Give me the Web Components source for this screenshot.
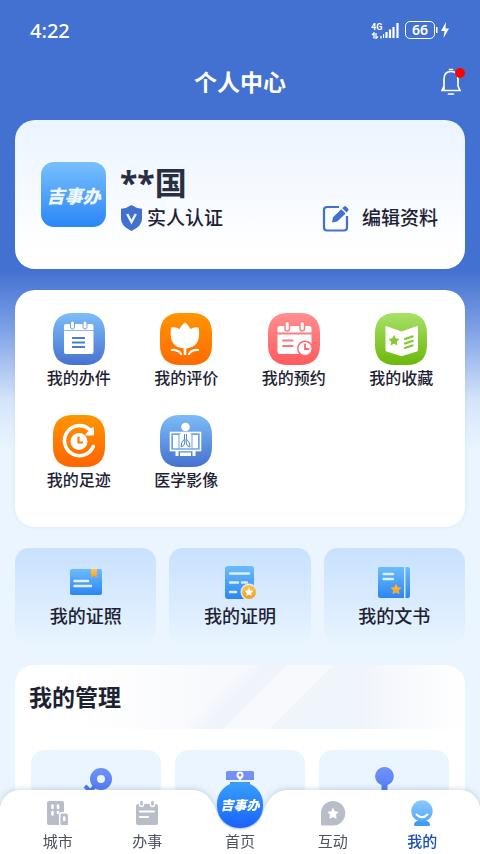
<!DOCTYPE html>
<html lang="zh-CN">
<head>
<meta charset="utf-8">
<meta name="viewport" content="width=device-width, initial-scale=1">
<title>个人中心</title>
<style>
	html {
		scrollbar-width: none;
	}
	body {
		margin: 0;
		color: #1d2233;
		background: #ebf5ff;
		font-family: "Noto Sans", "Noto Sans CJK SC", sans-serif;
	}
</style>
</head>
<body>

<profile-page>
	<status-bar slot="top" time="4:22" network="4G" battery="66"></status-bar>
	<page-header slot="top">个人中心</page-header>

	<profile-card name="**国" badge="实人认证" action="编辑资料"></profile-card>

	<menu-grid>
		<menu-item icon="tasks">我的办件</menu-item>
		<menu-item icon="review">我的评价</menu-item>
		<menu-item icon="booking">我的预约</menu-item>
		<menu-item icon="favorite">我的收藏</menu-item>
		<menu-item icon="history">我的足迹</menu-item>
		<menu-item icon="medical">医学影像</menu-item>
	</menu-grid>

	<doc-list>
		<doc-tile icon="license">我的证照</doc-tile>
		<doc-tile icon="proof">我的证明</doc-tile>
		<doc-tile icon="book">我的文书</doc-tile>
	</doc-list>

	<manage-card heading="我的管理">
		<manage-tile icon="key"></manage-tile>
		<manage-tile icon="post"></manage-tile>
		<manage-tile icon="stamp"></manage-tile>
	</manage-card>

	<tab-bar slot="bottom">
		<tab-item icon="city">城市</tab-item>
		<tab-item icon="work">办事</tab-item>
		<tab-item home>首页</tab-item>
		<tab-item icon="chat">互动</tab-item>
		<tab-item icon="me" active>我的</tab-item>
	</tab-bar>
</profile-page>

<script>
const squircle = (from, to, body) => `
	<svg viewBox="0 0 52 52" width="52" height="52" aria-hidden="true">
		<defs>
			<linearGradient id="bg" x1="0" y1="0" x2="0" y2="1">
				<stop offset="0" stop-color="${from}"/><stop offset="1" stop-color="${to}"/>
			</linearGradient>
		</defs>
		<path d="M20 0H32C45 0 52 7 52 20V32C52 45 45 52 32 52H20C7 52 0 45 0 32V20C0 7 7 0 20 0Z" fill="url(#bg)"/>
		${body}
	</svg>`;

const tile = (body) => `
	<svg viewBox="0 0 36 36" width="36" height="36" aria-hidden="true">
		<defs>
			<linearGradient id="blue" x1="0" y1="0" x2="0" y2="1">
				<stop offset="0" stop-color="#6cbcfd"/><stop offset="1" stop-color="#2b86f3"/>
			</linearGradient>
			<linearGradient id="gold" x1="0" y1="0" x2="0" y2="1">
				<stop offset="0" stop-color="#fdc64d"/><stop offset="1" stop-color="#f79c1d"/>
			</linearGradient>
		</defs>
		${body}
	</svg>`;

const manage = (body) => `
	<svg viewBox="0 0 40 40" width="40" height="40" aria-hidden="true">
		<defs>
			<linearGradient id="ink" x1="0" y1="0" x2="0" y2="40" gradientUnits="userSpaceOnUse">
				<stop offset="0" stop-color="#7294f8"/><stop offset="1" stop-color="#3f6df2"/>
			</linearGradient>
		</defs>
		${body}
	</svg>`;

const tab = (body) => `<svg viewBox="0 0 26 26" width="26" height="26" aria-hidden="true">${body}</svg>`;

const icons = {
	tasks: squircle('#7dbdf8', '#4672cf', `
		<path d="M13 11H38.500Q40.500 11 40.500 13V17H11V13Q11 11 13 11Z" fill="#fff"/>
		<path d="M11 17.800H40.500V39Q40.500 41 38.500 41H13Q11 41 11 39Z" fill="#fff"/>
		<g fill="#fff" stroke="#6ba5ea"><rect x="17.500" y="8" width="4" height="8" rx="2"/><rect x="30" y="8" width="4" height="8" rx="2"/></g>
		<path d="M19 25H32M19 29.500H32M19 34H32" stroke="#4b7bd4" stroke-width="2"/>`),
	review: squircle('#ff9500', '#ff6a00', `
		<path d="M25 9.500Q29 12 30.500 16Q34 13.500 38.500 14.500C40.500 25 38 32.500 29.500 34.800L26.300 35.500V42H23.700V35.500L20 34.800C12 32.500 9.500 25 11.200 14.500Q16 13.500 19.500 16Q21 12 25 9.500Z" fill="#fff"/>
		<path d="M12 37Q18 36.500 21 41M38 37Q32 36.500 29 41" fill="none" stroke="#fff" stroke-width="2.200" stroke-linecap="round"/>`),
	booking: squircle('#ff8f90', '#ff5b5f', `
		<path d="M12 13H41Q43.500 13 43.500 15.500V19.500H9.500V15.500Q9.500 13 12 13Z" fill="#fff"/>
		<path d="M9.500 21.500H43.500V38.500Q43.500 41 41 41H12Q9.500 41 9.500 38.500Z" fill="#fff"/>
		<g fill="#fff" stroke="#ff8082" stroke-width="1.500"><rect x="17" y="8.500" width="4.500" height="9.500" rx="2.200"/><rect x="32" y="8.500" width="4.500" height="9.500" rx="2.200"/></g>
		<path d="M15 27.500H24.500M15 33H24.500" stroke="#ff7678" stroke-width="2" stroke-linecap="round"/>
		<circle cx="37" cy="35.500" r="8" fill="#ff686b"/><circle cx="37" cy="35.500" r="6.500" fill="#fff"/>
		<path d="M37 31.500V36H40.500" fill="none" stroke="#ff686b" stroke-width="1.800" stroke-linecap="round"/>`),
	favorite: squircle('#a9e168', '#6cb80b', `
		<path d="M11 13L26.500 18.500L42 13Q43 13 43 14V37Q43 38 42 38.500L28 42.800Q26.500 43.300 25 42.800L11.500 38.500Q10.500 38 10.500 37V14Q10.500 13 11 13Z" fill="#fff"/>
		<path d="M19 21.800L20.700 25.500L24.500 26L21.700 28.700L22.400 32.500L19 30.600L15.600 32.500L16.300 28.700L13.500 26L17.300 25.500Z" fill="#83c82c"/>
		<path d="M30 26L37.500 23.500M30 30.500L37.500 28M30 35L37.500 32.500" stroke="#83c82c" stroke-width="2.300" stroke-linecap="round"/>`),
	history: squircle('#ff9500', '#ff6500', `
		<path d="M36.500 14.500A15 15 0 1 0 40.300 31.500" fill="none" stroke="#fff" stroke-width="3.600" stroke-linecap="round"/>
		<path d="M40 13V19.500H33.500Z" fill="#fff" stroke="#fff" stroke-width="2" stroke-linejoin="round"/>
		<circle cx="26" cy="26.500" r="8.500" fill="#fff"/>
		<path d="M25.500 21.500V27.500H30" fill="none" stroke="#ff7a00" stroke-width="2.200"/>`),
	medical: squircle('#7cbcf7', '#4671cf', `
		<circle cx="25.500" cy="12" r="4.300" fill="#fff"/>
		<rect x="10.500" y="17.500" width="30" height="18" fill="#6da3e8" stroke="#fff" stroke-width="1.600"/>
		<path d="M13 20H18.500V33.200H13ZM32.500 20H38V33.200H32.500Z" fill="#fff"/>
		<path d="M19.500 20.500Q19.500 17 25.500 17Q31.500 17 31.500 20.500V33.200H19.500Z" fill="#fff"/>
		<path d="M24.500 19V24Q20.500 28 21 32Q24.500 31.500 24.700 28V24M26.500 19V24Q30.500 28 30 32Q26.500 31.500 26.300 28V24" fill="none" stroke="#5487d7"/>
		<path d="M15.500 36H18.500V41H15.500ZM32.500 36H35.500V41H32.500ZM20 37.500H31V41H20Z" fill="#fff"/>`),

	license: tile(`
		<rect x="2" y="5" width="32" height="26" rx="2" fill="url(#blue)"/>
		<path d="M23 5H29V14L26 11.500L23 14Z" fill="url(#gold)"/>
		<path d="M6.500 17H20M6.500 22H23" stroke="#e4f2ff" stroke-width="2.400" stroke-linecap="round"/>`),
	proof: tile(`
		<rect x="3" y="2" width="29" height="33" rx="3" fill="url(#blue)"/>
		<path d="M8 9.500H27M8 18.500H16M20 18.500H25M8 28H14" stroke="#dceeff" stroke-width="2.400" stroke-linecap="round"/>
		<circle cx="27" cy="28" r="8.500" fill="#d8eafd"/><circle cx="27" cy="28" r="7" fill="url(#gold)"/>
		<path d="M27 23.600L28.400 26.400L31.500 26.800L29.200 29L29.800 32L27 30.500L24.200 32L24.800 29L22.500 26.800L25.600 26.400Z" fill="#fff"/>`),
	book: tile(`
		<path d="M4 3H28V34H4Q2 34 2 32V5Q2 3 4 3Z" fill="url(#blue)"/>
		<path d="M29.500 3H32Q34 3 34 5V32Q34 34 32 34H29.500Z" fill="url(#blue)"/>
		<path d="M7.500 10H17M7.500 15H17" stroke="#dceeff" stroke-width="2.400" stroke-linecap="round"/>
		<path d="M20 20.500L21.500 23.500L24.800 24L22.400 26.300L23 29.500L20 28L17 29.500L17.600 26.300L15.200 24L18.500 23.500Z" fill="url(#gold)" stroke="#f9ab2e" stroke-linejoin="round"/>`),

	key: manage(`
		<circle cx="25" cy="13" r="7.500" fill="none" stroke="url(#ink)" stroke-width="7"/>
		<path d="M19 20L9 31M13 24L9 20" stroke="#4f78f3" stroke-width="4"/>`),
	post: manage(`
		<path d="M7.500 5H32.500Q34 5 34 6.500V14H6V6.500Q6 5 7.500 5Z" fill="#7490f5"/>
		<path d="M10 16H30V36H10Z" fill="url(#ink)"/>
		<circle cx="20" cy="9" r="2.500" fill="none" stroke="#fff" stroke-width="2"/>
		<path d="M18 12L20 15L22 12Z" fill="#fff"/>`),
	stamp: manage(`
		<path d="M17.500 26V19A9.300 9.300 0 1 1 23.500 19V26Z" fill="url(#ink)"/>
		<path d="M7 24H34V28H7Z" fill="#6d8ef5"/>`),

	city: tab(`
		<path d="M4 1H17Q19 1 19 3V12H17Q14 12 14 15V25H4Q2 25 2 23V3Q2 1 4 1Z" fill="#b9bdca"/>
		<path d="M17 13.500H21Q23 13.500 23 15.500V25H15.500V15Q15.500 13.500 17 13.500Z" fill="#b9bdca"/>
		<path d="M7.500 5.500V8M13 5.500V8M7.500 12V14.500M13 12V13M19.200 17.500V20" stroke="#fff" stroke-width="2.600" stroke-linecap="round"/>`),
	work: tab(`
		<path d="M4 4H22Q24 4 24 6V23Q24 25 22 25H4Q2 25 2 23V6Q2 4 4 4Z" fill="#b9bdca"/>
		<g fill="#b9bdca" stroke="#fff" stroke-width="1.400"><rect x="5.500" y="0" width="4" height="6.500" rx="2"/><rect x="16.500" y="0" width="4" height="6.500" rx="2"/></g>
		<path d="M6 11.500H20M6 17H14" stroke="#fff" stroke-width="2.200" stroke-linecap="round"/>`),
	chat: tab(`
		<path d="M13 1A12 12 0 0 1 13 25.500H2.500Q1 25.500 1 24V13A12 12 0 0 1 13 1Z" fill="#b9bdca"/>
		<path d="M13 8.500L14.500 11.700L18 12.200L15.500 14.700L16.100 18.200L13 16.500L9.900 18.200L10.500 14.700L8 12.200L11.500 11.700Z" fill="#fff" stroke="#fff" stroke-linejoin="round"/>`),
	me: tab(`
		<defs>
			<linearGradient id="face" x1="0" y1="0" x2="0" y2="1">
				<stop offset="0" stop-color="#8ccafc"/><stop offset="1" stop-color="#55a7fa"/>
			</linearGradient>
		</defs>
		<path d="M8 21H18Q21 22 21 25Q21 26 19.500 26H6.500Q5 26 5 25Q5 22 8 21Z" fill="#3e9bf9"/>
		<circle cx="13" cy="11" r="10.700" fill="url(#face)"/>
		<path d="M7.500 14.500Q13 20 18.500 14.500" fill="none" stroke="#fff" stroke-width="2" stroke-linecap="round"/>`)
};

class BaseElement extends HTMLElement {
	connectedCallback() {
		if (this.shadowRoot) return;
		this.attachShadow({ mode: 'open' });
		this.shadowRoot.innerHTML = this.render();
	}

	attr(name) {
		return this.getAttribute(name) || '';
	}
}

class ProfilePage extends BaseElement {
	render() {
		return `
			<style>
				:host {
					display: block;
					min-height: 100vh;
					background: linear-gradient( #4371d1 270px, #7fa2e6 330px, #d5e4fa 400px, #ebf5ff 450px );
				}
				main {
					display: flex;
					flex-direction: column;
					gap: 21px;
					padding: 0 15px;
				}
			</style>
			<header><slot name="top"></slot></header>
			<main><slot></slot></main>
			<slot name="bottom"></slot>
		`;
	}
}

class StatusBar extends BaseElement {
	render() {
		return `
			<style>
				:host {
					display: flex;
					justify-content: space-between;
					align-items: center;
					height: 60px;
					padding: 0 30px;
					color: #fff;
				}
				time {
					font-size: 20px;
					font-weight: 500;
				}
				.system {
					display: flex;
					align-items: center;
					gap: 6px;
				}
				.signal {
					display: grid;
					grid-template-columns: 12px 16px;
				}
				.network {
					font: 700 9px/10px Roboto, sans-serif;
				}
				.bars {
					grid-row: 1 / 3;
					grid-column: 2;
				}
				.battery {
					display: flex;
					align-items: center;
				}
				.level {
					box-sizing: border-box;
					width: 30px;
					border: 1px solid #fff;
					border-radius: 5px;
					text-align: center;
					font-size: 14px;
					font-weight: 600;
					line-height: 16px;
				}
			</style>
			<time>${this.attr('time')}</time>
			<div class="system">
				<div class="signal">
					<span class="network">${this.attr('network')}</span>
					<svg width="12" height="7" viewBox="0 0 12 7" aria-hidden="true"><path d="M3 6.500V1L1 3M5 1V6.500L7 4.500M10 4V6.500" fill="none" stroke="#fff" stroke-width="1.300"/></svg>
					<svg class="bars" width="16" height="17" viewBox="0 0 16 17" aria-hidden="true"><path d="M0 12V16M3.500 10V16M7 7.500V16M10.500 5V16M14.500 1V16" stroke="#fff" stroke-width="2.200"/></svg>
				</div>
				<div class="battery">
					<span class="level">${this.attr('battery')}</span>
					<svg width="15" height="18" viewBox="0 0 15 18" fill="#fff" aria-hidden="true"><path d="M1 6H2.500V12H1ZM11 1L6 10H9.500L8.500 17L14 7.500H10.500Z"/></svg>
				</div>
			</div>
		`;
	}
}

class PageHeader extends BaseElement {
	render() {
		return `
			<style>
				:host {
					display: grid;
					grid-template-columns: 1fr auto 1fr;
					align-items: center;
					height: 44px;
					padding: 0 19px 16px;
					color: #fff;
				}
				h1 {
					grid-column: 2;
					margin: 0;
					font-size: 23px;
					font-weight: 700;
					line-height: 32px;
				}
				button {
					justify-self: end;
					position: relative;
					display: flex;
					padding: 0;
					border: 0;
					background: none;
				}
				button::after {
					content: "";
					position: absolute;
					top: 0;
					right: -4px;
					width: 10px;
					height: 10px;
					border-radius: 50%;
					background: #f00;
				}
			</style>
			<h1><slot></slot></h1>
			<button type="button" aria-label="消息">
				<svg width="20" height="28" viewBox="0 0 20 28" fill="none" stroke="#fff" stroke-width="1.700" stroke-linecap="round" aria-hidden="true">
					<path d="M8.500 1.500H11.500M3 22V11Q3 3.500 10 3.500Q17 3.500 17 11V18L19 22.500H1L3 18M7.500 26H12.500"/>
				</svg>
			</button>
		`;
	}
}

class ProfileCard extends BaseElement {
	render() {
		return `
			<style>
				:host {
					display: flex;
					align-items: flex-start;
					gap: 14px;
					padding: 42px 27px 37px 26px;
					border-radius: 20px;
					background: linear-gradient( #ebf4ff, #fff 90% );
				}
				.avatar {
					display: grid;
					place-items: center;
					width: 65px;
					height: 65px;
					border-radius: 13px;
					background: linear-gradient( #77c0fe, #2b86f7 );
					color: #eff8ff;
					font-size: 18px;
					font-style: italic;
					font-weight: 900;
				}
				.info {
					flex: 1;
				}
				h2 {
					margin: 0;
					color: #2a2e42;
					font-size: 32px;
					font-weight: 700;
					line-height: 42px;
				}
				.row {
					display: flex;
					align-items: center;
					justify-content: space-between;
					height: 28px;
				}
				.badge,
				button {
					display: flex;
					align-items: center;
					gap: 4px;
					padding: 0;
					border: 0;
					background: none;
					color: inherit;
					font: 500 19px/28px "Noto Sans", "Noto Sans CJK SC", sans-serif;
				}
				button {
					gap: 13px;
				}
			</style>
			<div class="avatar">吉事办</div>
			<div class="info">
				<h2>${this.attr('name')}</h2>
				<div class="row">
					<span class="badge">
						<svg width="23" height="26" viewBox="0 0 23 26" aria-hidden="true">
							<path d="M11.500 0Q16 3.300 22 3.700V14Q22 21 11.500 26Q1 21 1 14V3.700Q7 3.300 11.500 0Z" fill="#4170d0"/>
							<path d="M7.200 9L11.500 17L15.800 9" fill="none" stroke="#eef5ff" stroke-width="2.400"/>
						</svg>
						${this.attr('badge')}
					</span>
					<button type="button">
						<svg width="27" height="27" viewBox="0 0 27 27" aria-hidden="true">
							<path d="M17 2H5Q2 2 2 5V22.500Q2 25.500 5 25.500H22Q25 25.500 25 22.500V11" fill="none" stroke="#4170d0" stroke-width="2.200"/>
							<path d="M10 17.500L11 12.200L19.300 4.200L23.600 8.600L15.300 16.500ZM20.300 3.200L22 1.500Q23 0.500 24 1.500L26.200 3.700Q27 4.700 26.200 5.700L24.500 7.500Z" fill="#4170d0"/>
						</svg>
						${this.attr('action')}
					</button>
				</div>
			</div>
		`;
	}
}

class MenuGrid extends BaseElement {
	render() {
		return `
			<style>
				:host {
					display: grid;
					grid-template-columns: repeat( 4, 1fr );
					row-gap: 26px;
					padding: 23px 10px 36px;
					border-radius: 20px;
					background: #fff;
					box-shadow: 0 0 4px rgba( 70,130,210,0.1 );
				}
			</style>
			<slot></slot>
		`;
	}
}

class MenuItem extends BaseElement {
	render() {
		return `
			<style>
				:host {
					display: block;
				}
				a {
					display: flex;
					flex-direction: column;
					align-items: center;
					gap: 2px;
					color: inherit;
					font-size: 16px;
					font-weight: 500;
					line-height: 22px;
					text-decoration: none;
				}
			</style>
			<a href="#">${icons[this.attr('icon')]}<span><slot></slot></span></a>
		`;
	}
}

class DocList extends BaseElement {
	render() {
		return `
			<style>
				:host {
					display: grid;
					grid-template-columns: repeat( 3, 1fr );
					gap: 13px;
				}
			</style>
			<slot></slot>
		`;
	}
}

class DocTile extends BaseElement {
	render() {
		return `
			<style>
				:host {
					display: block;
				}
				a {
					display: flex;
					flex-direction: column;
					align-items: center;
					gap: 4px;
					padding: 16px 0;
					border-radius: 14px;
					background: linear-gradient( #c8e1fe, #e8f4ff );
					color: inherit;
					font-size: 18px;
					font-weight: 500;
					line-height: 24px;
					text-decoration: none;
				}
			</style>
			<a href="#">${icons[this.attr('icon')]}<span><slot></slot></span></a>
		`;
	}
}

class ManageCard extends BaseElement {
	render() {
		return `
			<style>
				:host {
					display: block;
					overflow: hidden;
					border-radius: 20px 20px 0 0;
					background: #fff;
				}
				h2 {
					margin: 0;
					padding: 0 14px;
					background:
						linear-gradient( 90deg, #fff 15%, rgba( 255,255,255,0 ) 45%, rgba( 255,255,255,0 ) 75%, #fff ),
						linear-gradient( 135deg, #f8f9fd 44%, #eff3fb 50%, #f1f4fb 53%, #f7f9fd 53%, #f8f9fd 62%, #f0f4fb 62% );
					font-size: 23px;
					font-weight: 700;
					line-height: 64px;
				}
				.tiles {
					display: grid;
					grid-template-columns: repeat( 3, 1fr );
					gap: 14px;
					padding: 21px 16px 0;
				}
			</style>
			<h2>${this.attr('heading')}</h2>
			<div class="tiles"><slot></slot></div>
		`;
	}
}

class ManageTile extends BaseElement {
	render() {
		return `
			<style>
				:host {
					display: flex;
					justify-content: center;
					padding: 16px 0 48px;
					border-radius: 14px;
					background: #eaf5ff;
				}
			</style>
			${icons[this.attr('icon')]}
		`;
	}
}

class TabBar extends BaseElement {
	render() {
		return `
			<style>
				:host {
					display: block;
					position: fixed;
					right: 0;
					bottom: 0;
					left: 0;
				}
				.shape {
					position: absolute;
					inset: 0;
					display: flex;
					filter: drop-shadow( 0 -1px 3px rgba( 40,70,110,0.2 ) );
				}
				.side {
					flex: 1;
					background: #fff;
				}
				.side:first-child {
					border-top-left-radius: 20px;
				}
				.side:last-child {
					border-top-right-radius: 20px;
				}
				nav {
					position: relative;
					display: grid;
					grid-template-columns: 1fr 1fr 96px 1fr 1fr;
					height: 64px;
					padding: 0 13px;
				}
			</style>
			<div class="shape">
				<div class="side"></div>
				<svg width="96" height="64" viewBox="0 0 96 64" aria-hidden="true">
					<path d="M0 0C14 0 20 10 26 24Q32 38 48 38Q64 38 70 24C76 10 82 0 96 0V64H0Z" fill="#fff"/>
				</svg>
				<div class="side"></div>
			</div>
			<nav><slot></slot></nav>
		`;
	}
}

class TabItem extends BaseElement {
	render() {
		const icon = this.hasAttribute('home') ? '<span class="home">吉事办</span>' : icons[this.attr('icon')];

		return `
			<style>
				:host {
					display: block;
				}
				a {
					display: flex;
					flex-direction: column;
					align-items: center;
					gap: 5px;
					padding-top: 10px;
					color: #4d5162;
					font-size: 15px;
					line-height: 20px;
					text-decoration: none;
				}
				:host([active]) a {
					color: #1a50b0;
					font-weight: 500;
				}
				:host([home]) a {
					gap: 3px;
					padding: 0;
					margin-top: -8px;
				}
				.home {
					display: grid;
					place-items: center;
					width: 46px;
					height: 46px;
					border-radius: 22px;
					background: linear-gradient( #36a0fb, #1b62fb );
					box-shadow: 0 1px 2px rgba( 30,100,240,0.4 );
					color: #fff;
					font-size: 13px;
					font-style: italic;
					font-weight: 900;
					white-space: nowrap;
				}
			</style>
			<a href="#">${icon}<span><slot></slot></span></a>
		`;
	}
}

customElements.define('profile-page', ProfilePage);
customElements.define('status-bar', StatusBar);
customElements.define('page-header', PageHeader);
customElements.define('profile-card', ProfileCard);
customElements.define('menu-grid', MenuGrid);
customElements.define('menu-item', MenuItem);
customElements.define('doc-list', DocList);
customElements.define('doc-tile', DocTile);
customElements.define('manage-card', ManageCard);
customElements.define('manage-tile', ManageTile);
customElements.define('tab-bar', TabBar);
customElements.define('tab-item', TabItem);
</script>
</body>
</html>
